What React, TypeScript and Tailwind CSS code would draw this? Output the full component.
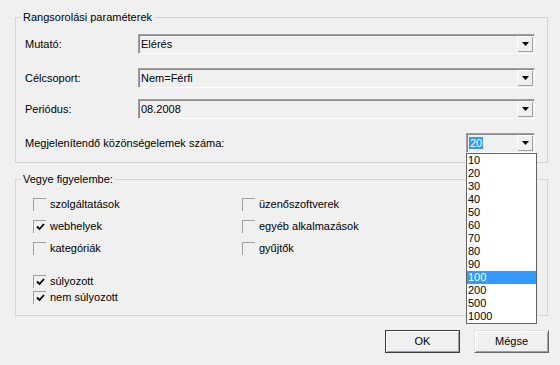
import React from 'react';

const Arrow = () => (
  <svg width="7" height="4" viewBox="0 0 7 4" className="block">
    <path d="M0 0 H7 L3.5 4 Z" fill="#000" />
  </svg>
);

const Combo = ({ value, className = '', selected = false }: { value: string; className?: string; selected?: boolean }) => (
  <div
    className={`flex h-[20px] items-stretch border-t border-l border-t-[#a0a0a0] border-l-[#a0a0a0] border-b border-r border-b-white border-r-white shadow-[inset_1px_1px_#8a8a8a] bg-[#f0f0f0] ${className}`}
  >
    <div className="flex flex-1 items-center pl-[2px]">
      <span className={selected ? 'bg-[#3399ff] px-[1px] text-white leading-[12px]' : 'leading-[12px]'}>{value}</span>
    </div>
    <div className="my-[1px] mr-[1px] flex w-[16px] items-center justify-center shadow-[inset_1px_1px_#fff,inset_-1px_-1px_#a0a0a0]">
      <Arrow />
    </div>
  </div>
);

const Check = ({ checked }: { checked: boolean }) => (
  <div className="flex h-[13px] w-[13px] shrink-0 items-center justify-center border-t border-l border-[#a0a0a0]">
    {checked && (
      <svg width="9" height="8" viewBox="0 0 9 8" className="block">
        <path d="M1 3.5 L3.5 6 L8 1" fill="none" stroke="#000" strokeWidth="1.8" />
      </svg>
    )}
  </div>
);

const CheckRow = ({ label, checked = false }: { label: string; checked?: boolean }) => (
  <div className="flex h-[16px] items-center gap-[4px]">
    <Check checked={checked} />
    <span>{label}</span>
  </div>
);

const options = ['10', '20', '30', '40', '50', '60', '70', '80', '90', '100', '200', '500', '1000'];

export default function App() {
  return (
    <div
      className="relative h-[365px] w-[560px] overflow-hidden bg-[#f0f0f0] text-[11px] text-black"
      style={{ fontFamily: '"Liberation Sans", Arial, sans-serif' }}
    >
      <div className="pt-[17px] pl-[15px] pr-[12px]">
        {/* Rangsorolási paraméterek */}
        <div className="flex h-[146px] flex-col border border-[#d5d5d5] pl-[9px] pr-[12px]">
          <span className="-mt-[8px] ml-[-4px] w-fit bg-[#f0f0f0] px-[2px] leading-[14px]">Rangsorolási paraméterek</span>

          <div className="mt-[10px] flex items-center">
            <span className="w-[113px]">Mutató:</span>
            <Combo value="Elérés" className="flex-1" />
          </div>
          <div className="mt-[14px] flex items-center">
            <span className="w-[113px]">Célcsoport:</span>
            <Combo value="Nem=Férfi" className="flex-1" />
          </div>
          <div className="mt-[11px] flex items-center">
            <span className="w-[113px]">Periódus:</span>
            <Combo value="08.2008" className="flex-1" />
          </div>
          <div className="mt-[14px] flex items-center justify-between">
            <span>Megjelenítendő közönségelemek száma:</span>
            <div className="relative w-[69px]">
              <Combo value="20" selected />
              <div className="absolute top-full left-0 z-10 w-[71px] border border-[#646464] bg-white">
                {options.map((o) => (
                  <div
                    key={o}
                    className={`h-[13px] pl-[1px] leading-[13px] ${o === '100' ? 'bg-[#3399ff] text-white' : ''}`}
                  >
                    {o}
                  </div>
                ))}
              </div>
            </div>
          </div>
        </div>

        {/* Vegye figyelembe */}
        <div className="mt-[16px] flex h-[137px] flex-col border border-[#d5d5d5] pl-[17px]">
          <span className="-mt-[8px] ml-[-12px] w-fit bg-[#f0f0f0] px-[2px] leading-[14px]">Vegye figyelembe:</span>
          <div className="mt-[10px] grid grid-cols-[209px_1fr] gap-y-[6px]">
            <CheckRow label="szolgáltatások" />
            <CheckRow label="üzenőszoftverek" />
            <CheckRow label="webhelyek" checked />
            <CheckRow label="egyéb alkalmazások" />
            <CheckRow label="kategóriák" />
            <CheckRow label="gyűjtők" />
          </div>
          <div className="mt-[17px] flex flex-col">
            <CheckRow label="súlyozott" checked />
            <CheckRow label="nem súlyozott" checked />
          </div>
        </div>
      </div>

      <div className="mt-[14px] flex justify-end gap-[14px] pr-[11px]">
        <button className="flex h-[23px] w-[75px] items-center justify-center border border-[#3c3c3c] bg-[#f0f0f0] shadow-[inset_1px_1px_#fff,inset_-1px_-1px_#a0a0a0]">
          OK
        </button>
        <button className="flex h-[23px] w-[75px] items-center justify-center border border-t-[#e3e3e3] border-l-[#e3e3e3] border-b-[#696969] border-r-[#696969] bg-[#f0f0f0] shadow-[inset_1px_1px_#fff,inset_-1px_-1px_#a0a0a0]">
          Mégse
        </button>
      </div>
    </div>
  );
}
